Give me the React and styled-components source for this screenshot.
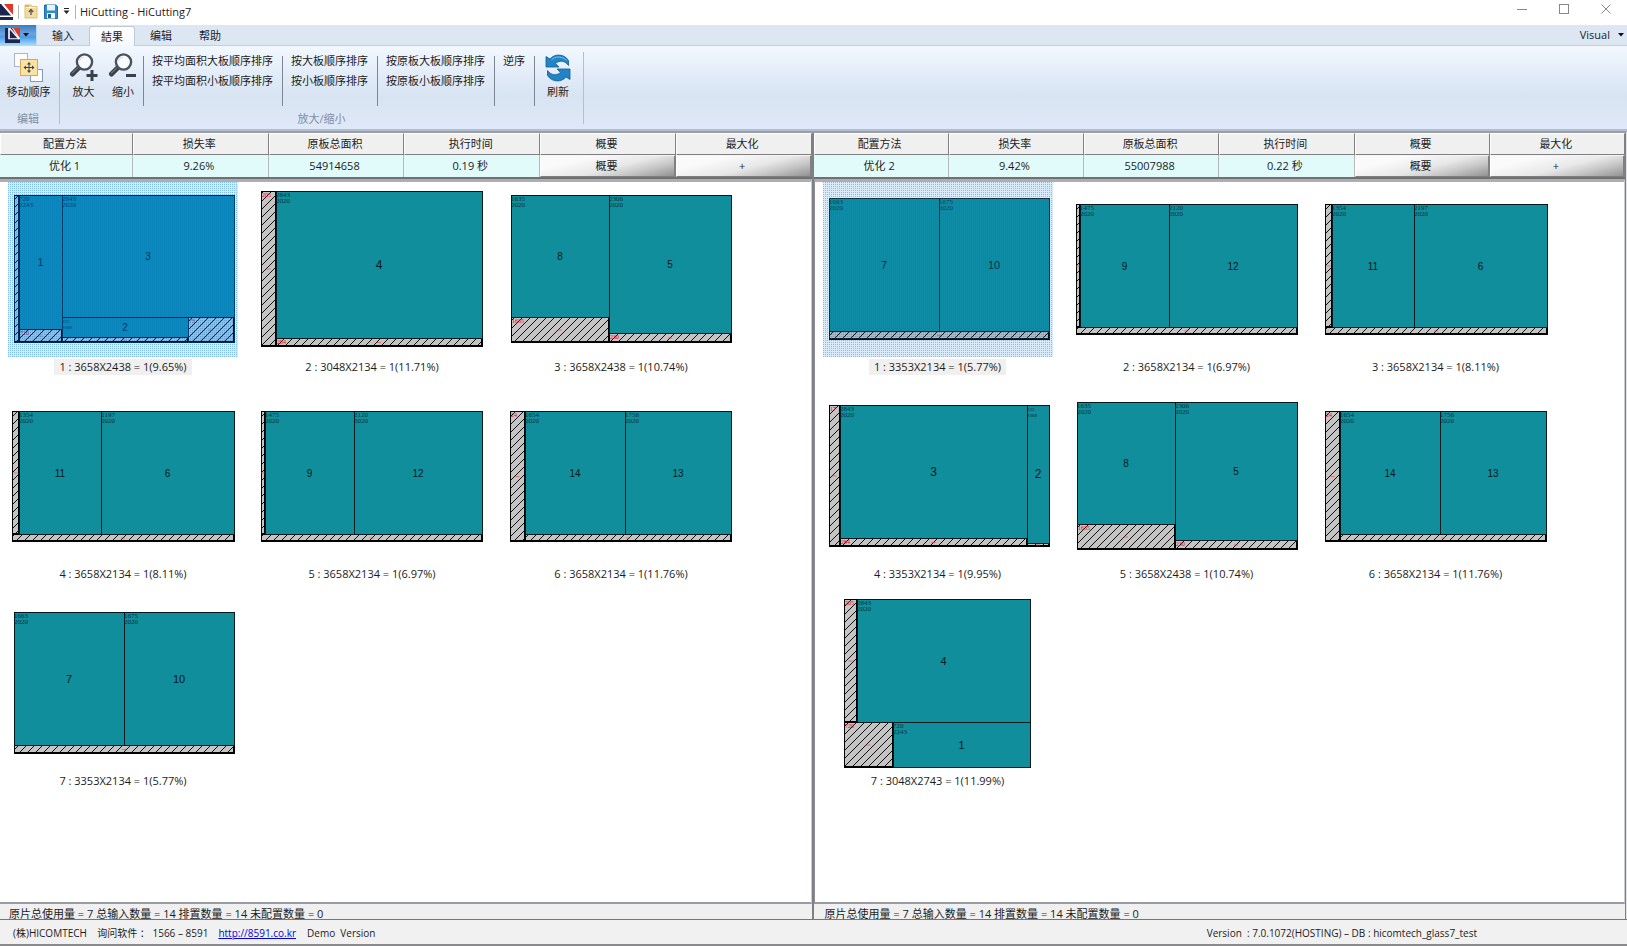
import React from "react";
import styled, { createGlobalStyle, css } from "styled-components";

const Global = createGlobalStyle`
  * { box-sizing: border-box; }
  body {
    margin: 0;
    background: #f0f0f0;
    color: #1c1c1c;
    font: 11px/16px "Open Sans", "Noto Sans CJK SC", sans-serif;
  }
  button { font: inherit; color: inherit; border: 0; background: none; padding: 0; }
  h1, p { margin: 0; font: inherit; }
`;

/* ---------- frame ---------- */

const Page = styled.div`
  display: flex;
  flex-direction: column;
  min-height: 100vh;
`;

const TitleBar = styled.header`
  display: flex;
  align-items: center;
  height: 25px;
  padding-bottom: 2px;
  background: #fff;
`;

const QuickButton = styled.button`
  display: flex;
  align-items: center;
  justify-content: center;
  width: ${(p) => p.$width || 20}px;
  height: 18px;
  svg { display: block; }
`;

const TitleRule = styled.span`
  width: 1px;
  height: 14px;
  margin: 0 ${(p) => p.$space || 4}px 0 ${(p) => p.$before || 4}px;
  background: #b4b4b4;
`;

const Title = styled.h1`
  font-size: 11px;
`;

const WindowButtons = styled.div`
  display: flex;
  align-self: flex-start;
  gap: 30px;
  margin-left: auto;
  padding-right: 15px;
`;

/* ---------- tabs ---------- */

const TabBar = styled.nav`
  display: flex;
  align-items: stretch;
  height: 21px;
  background: #dde7f3;
  border-bottom: 1px solid #c4d0de;
`;

const FileButton = styled.button`
  display: flex;
  align-items: center;
  gap: 3px;
  width: 37px;
  padding-left: 5px;
  background: linear-gradient(#3a7cc4, #6aa5dc 45%, #4b9be6 60%, #a5d8fb);
  border-right: 1px solid #bcd8f2;
`;

const Tab = styled.button`
  width: 46px;
  margin: 1px 2px 0 1px;
  line-height: 20px;
  ${(p) =>
    p.$active &&
    css`
      height: 20px;
      background: linear-gradient(#fff, #f4f8fe);
      border: 1px solid #bccadb;
      border-bottom: 0;
      border-radius: 3px 3px 0 0;
    `}
`;

const Tabs = styled.div`
  display: flex;
  padding-left: 2px;
`;

const VisualMenu = styled.button`
  display: flex;
  align-items: center;
  gap: 8px;
  margin-left: auto;
  padding-right: 3px;
`;

/* ---------- ribbon ---------- */

const Ribbon = styled.section`
  display: flex;
  height: 85px;
  padding: 6px 0;
  background: linear-gradient(#f3f8ff, #e2ecf8 35%, #d8e4f2 60%, #dfe8f8);
  border-bottom: 2px solid #b1bfd2;
`;

const RibbonGroup = styled.div`
  display: flex;
  flex-direction: column;
  justify-content: space-between;
  height: 72px;
  border-right: 1px solid #b3c0d2;
`;

const GroupBody = styled.div`
  display: flex;
  padding: 0 ${(p) => p.$right}px 0 ${(p) => p.$left}px;
`;

const GroupName = styled.p`
  color: #7d8da3;
  line-height: 11px;
  text-align: center;
  padding-right: ${(p) => p.$shift || 0}px;
`;

const BigButton = styled.button`
  display: flex;
  flex-direction: column;
  align-items: center;
  width: ${(p) => p.$width}px;
  white-space: nowrap;
  line-height: 16px;
  svg { display: block; margin-bottom: 1px; }
`;

const CommandList = styled.div`
  display: flex;
  flex-direction: column;
  align-items: flex-start;
  height: 50px;
  margin-top: 4px;
  padding: 0 9px 0 8px;
  border-left: 1px solid #7d8794;
  border-right: ${(p) => (p.$last ? "1px solid #7d8794" : "0")};
`;

const Command = styled.button`
  margin: -3px 0 7px;
  line-height: 16px;
  white-space: nowrap;
`;

/* ---------- result panes ---------- */

const Workspace = styled.main`
  display: flex;
  flex: 1;
  gap: 2px;
  padding-right: 1px;
  background: #7e8086;
  border-top: 2px solid #9c9ea2;
  border-right: 1px solid #e4e4e6;
`;

const Pane = styled.section`
  display: flex;
  flex-direction: column;
  flex: 1 1 0;
  min-width: 0;
  background: #f0f0f0;
`;

const Summary = styled.table`
  width: 100%;
  table-layout: fixed;
  border-collapse: separate;
  border-spacing: 0;
  text-align: center;
`;

const HeadCell = styled.th`
  height: 22px;
  padding: 0 3px 0 0;
  font-weight: normal;
  background: #f0f0f0;
  border: 1px solid #808080;
  border-top-color: #fff;
  border-left-color: #fff;
  &:first-child { width: ${(p) => p.$first}; }
`;

const ValueCell = styled.td`
  height: 22px;
  padding: ${(p) => (p.$plain ? "0" : "0 3px 0 0")};
  line-height: 20px;
  background: ${(p) => (p.$plain ? "#c8c8c8" : "#e0fbfa")};
  border-right: ${(p) => (p.$plain ? "0" : "1px solid #b4b8b8")};
`;

const CellButton = styled.button`
  display: block;
  width: 100%;
  height: 22px;
  padding-right: 2px;
  color: #1c1c1c;
  background: linear-gradient(166deg, #fafafa 25%, #e8e8e8 55%, #c6c6c6 75%, #929292);
  border: 1px solid #808080;
  border-left-color: #fff;
  border-top-color: #f4f4f4;
  border-right-width: 2px;
`;

const Board = styled.div`
  flex: 1;
  display: grid;
  grid-template-columns: repeat(auto-fill, 230px);
  grid-auto-rows: 196px;
  gap: 11px 19px;
  align-content: start;
  margin-top: 2px;
  padding-left: 8px;
  background: #fff;
  border-top: 3px solid #adadb2;
  border-bottom: 2px solid #9a9ca4;
  border-left: ${(p) => (p.$edge ? "1px solid #8a8e98" : "0")};
  border-right: 1px solid #c9ccd2;
  box-shadow: 0 -2px 0 #6f7074;
`;

const Sheet = styled.figure`
  display: flex;
  flex-direction: column;
  align-items: center;
  margin: 0;
  svg { display: block; }
`;

const Caption = styled.figcaption`
  margin-top: 2px;
  padding: 0 5px;
  line-height: 16px;
  white-space: nowrap;
  background: ${(p) => (p.$selected ? "#f0f0f0" : "transparent")};
`;

const Totals = styled.p`
  height: 15px;
  padding-left: ${(p) => p.$inset}px;
  line-height: 20px;
  white-space: nowrap;
`;

const Footer = styled.footer`
  display: flex;
  align-items: center;
  height: 27px;
  padding: 1px 150px 0 13px;
  background: #f1f1f1;
  border-top: 1px solid #76777a;
  border-bottom: 2px solid #8a8a8c;
  font-size: 10px;
  white-space: pre;
  a { color: #0000ee; margin: 0 11px 0 10px; }
`;

const Version = styled.span`
  margin-left: auto;
`;

/* ---------- icons ---------- */

const Logo = ({ size = 15 }) => (
  <svg width={size} height={size} viewBox="0 0 15 15">
    <rect width="15" height="15" fill="#fff" />
    <path d="M0 0H3.2V11.2H15V15H0Z" fill="#1b2550" />
    <path d="M4.8 0H7L13 9.500V10.200H4.800Z" fill="#1b2550" />
    <path d="M8 0H15V10.200Z" fill="#e2382a" />
    <path d="M4.500 0L14 11" stroke="#fff" strokeWidth="1.400" />
  </svg>
);

const AppMark = () => (
  <svg width="13" height="16" viewBox="0 0 13 16">
    <path d="M0 0V11.500H11.500L1.500 0Z" fill="#1b2550" />
    <path d="M4 0H13V11Z" fill="#e2382a" />
    <path d="M0 13H13V16H0Z" fill="#1b2550" />
    <path d="M2 0L12.500 12" stroke="#fff" strokeWidth="1.400" />
  </svg>
);

const FolderIcon = () => (
  <svg width="14" height="15" viewBox="0 0 14 15">
    <path d="M1 1H7L8 2.5H13V14H1Z" fill="#f3dc9c" stroke="#dcc07c" />
    <path d="M1 1H5V3H1Z" fill="#d9b565" />
    <path d="M2 3.5H12" stroke="#fff8e0" />
    <path d="M7 11V6M4.8 8L7 5.5L9.2 8" fill="none" stroke="#4d5666" strokeWidth="1.3" />
  </svg>
);

const SaveIcon = () => (
  <svg width="14" height="15" viewBox="0 0 14 15">
    <path d="M.5 1H12L13.5 2.5V14.5H.5Z" fill="#2f8ccb" stroke="#1e6ea6" />
    <rect x="3" y="1" width="8" height="5.5" fill="#e9f3fa" />
    <rect x="3" y="9" width="8" height="5.5" fill="#fff" />
    <rect x="4" y="10" width="3" height="4" fill="#1e5f92" />
  </svg>
);

const MoreIcon = () => (
  <svg width="7" height="7" viewBox="0 0 7 7">
    <path d="M1 .5H6" stroke="#222" />
    <path d="M.5 2.5H6.5L3.5 6Z" fill="#222" />
  </svg>
);

const Caret = ({ color = "#111" }) => (
  <svg width="6" height="4" viewBox="0 0 6 4">
    <path d="M0 0H6L3 3.5Z" fill={color} />
  </svg>
);

const MoveIcon = () => (
  <svg width="30" height="31" viewBox="0 0 30 31">
    <rect x=".5" y="1.5" width="13" height="13" fill="#fdfdff" stroke="#aab4c4" />
    <rect x="16.500" y="17.500" width="12" height="12" fill="#fdfdff" stroke="#8796ad" />
    <rect x="6.500" y="7.500" width="17" height="16" fill="#fbe2a0" stroke="#d2ab58" />
    <path d="M15 11V20M10.500 15.500H19.500" stroke="#38424f" />
    <path d="M13 12.500L15 10L17 12.500ZM13 18.500L15 21L17 18.500ZM12 13.500L9.500 15.500L12 17.500ZM18 13.500L20.500 15.500L18 17.500Z" fill="#38424f" />
  </svg>
);

const ZoomIcon = ({ plus }) => (
  <svg width="30" height="31" viewBox="0 0 30 31">
    <path d="M10 15.500L3.500 22" stroke="#3a4149" strokeWidth="5" strokeLinecap="round" />
    <path d="M9 15.500L3 21.500" stroke="#8a9299" strokeWidth="1" />
    <circle cx="15.500" cy="10" r="7.600" fill="#f8fbff" stroke="#4b525a" strokeWidth="2.400" />
    <path d="M10.500 9A5 5 0 0 1 15 5" fill="none" stroke="#cfd9e4" />
    <path d={plus ? "M17.500 23.500H28.500M23 18V29" : "M18 23.500H28"} stroke="#39414a" strokeWidth="3" />
  </svg>
);

const RefreshIcon = () => (
  <svg width="28" height="31" viewBox="0 0 28 31">
    <g fill="#1f85c7" stroke="#125b92" strokeWidth=".8" strokeLinejoin="round">
      <path d="M2 4.500L6 7C10.500 1.500 20 1.500 24.500 8.500V13.500C21 8.500 15.500 8 11.500 11.500L15 15H2Z" />
      <path d="M26 27.500L22 25C17.500 30.500 8 30.500 3.500 23.500V18.500C7 23.500 12.500 24 16.500 20.500L13 17H26Z" />
    </g>
    <path d="M7.500 7.800C11.500 3.800 18.500 4 22.500 8.500" fill="none" stroke="#7cc3ec" />
  </svg>
);

/* ---------- cutting drawings ---------- */

// g: glass piece [number, x1, y1, x2, y2, width, height]; w: offcut [x1, y1, x2, y2, size]
const layoutA = {
  g: [[1, 11, 13, 54, 147, 720, 2243], [3, 54, 13, 226, 135, 2843, 2020], [2, 54, 135, 180, 155, 335, 2088]],
  w: [[6, 13, 11, 160, ""], [11, 147, 54, 160, "720"], [180, 135, 226, 160, "73"], [54, 155, 180, 160, ""]],
};
const layoutB = {
  g: [[4, 19, 9, 225, 156, 2843, 2020]],
  w: [[4, 9, 19, 164, "205"], [19, 156, 225, 164, "284"]],
};
const layoutC = {
  g: [[8, 5, 13, 103, 135, 1635, 2020], [5, 103, 13, 225, 151, 2306, 2020]],
  w: [[5, 135, 103, 160, "1635"], [103, 151, 225, 160, "230"]],
};
const layoutD = {
  g: [[11, 11, 22, 93, 145, 1354, 2020], [6, 93, 22, 226, 145, 2197, 2020]],
  w: [[4, 22, 11, 145, ""], [4, 145, 226, 152, ""]],
};
const layoutE = {
  g: [[9, 8, 22, 97, 145, 1475, 2020], [12, 97, 22, 225, 145, 2120, 2020]],
  w: [[4, 22, 8, 145, ""], [4, 145, 225, 152, ""]],
};
const layoutF = {
  g: [[14, 19, 22, 119, 145, 1654, 2020], [13, 119, 22, 225, 145, 1756, 2020]],
  w: [[4, 22, 19, 152, "24"], [19, 145, 225, 152, ""]],
};
const layoutG = {
  g: [[7, 6, 16, 116, 149, 1663, 2020], [10, 116, 16, 226, 149, 1675, 2020]],
  w: [[6, 149, 226, 157, ""]],
};
const layoutH = {
  g: [[3, 17, 16, 204, 149, 2843, 2020], [2, 204, 16, 226, 154, 335, 2088]],
  w: [[6, 16, 17, 157, "17"], [17, 149, 204, 157, "284"], [204, 154, 226, 157, ""]],
};
const layoutI = {
  g: [[4, 34, 3, 207, 126, 2843, 2020], [1, 70, 126, 207, 171, 720, 2243]],
  w: [[21, 3, 34, 126, "205"], [21, 126, 70, 171, "720"]],
};

const PieceNumber = styled.text`
  font: ${(p) => p.$size}px "Liberation Sans", sans-serif;
  fill: #06181c;
  text-anchor: middle;
`;

const PieceSize = styled.text`
  font: ${(p) => p.$size}px "Liberation Serif", serif;
  fill: #0a3038;
`;

const OffcutSize = styled.text`
  font: 6px "Liberation Serif", serif;
  fill: #f00020;
`;

function Drawing({ layout, selected, numberSize = 10 }) {
  return (
    <svg width="230" height="175" viewBox="0 0 230 175" role="img">
      <defs>
        <pattern id="hatch" width="8" height="8" patternUnits="userSpaceOnUse">
          <rect width="8" height="8" fill="#c4c4c4" />
          <path d="M-1 9L9 -1M-1 1L1 -1M7 9L9 7" stroke="#111" strokeWidth="1" />
        </pattern>
        <pattern id="select" width="2" height="2" patternUnits="userSpaceOnUse">
          <rect width="2" height="2" fill="#0078d7" opacity=".15" />
          <rect width="1" height="1" fill="#0078d7" opacity=".4" />
        </pattern>
      </defs>
      {layout.w.map(([x1, y1, x2, y2, size]) => (
        <g key={`${x1}-${y1}`}>
          <rect x={x1 + 0.5} y={y1 + 0.5} width={x2 - x1} height={y2 - y1} fill="url(#hatch)" stroke="#000" />
          <path d={`M${x1 + 1} ${y2 - 0.5}H${x2}M${x2 - 0.5} ${y1}V${y2}`} stroke="#000" />
          <rect x={(x1 + x2) / 2 - 2} y={(y1 + y2) / 2} width="4" height="1" fill="#f33" opacity=".6" />
          <OffcutSize x={x1 + 1} y={y1 + 6}>{size}</OffcutSize>
        </g>
      ))}
      {layout.g.map(([n, x1, y1, x2, y2, w, h]) => (
        <g key={n}>
          <rect x={x1 + 0.5} y={y1 + 0.5} width={x2 - x1} height={y2 - y1} fill="#108e9c" stroke="#05181b" />
          <PieceSize $size={w < 400 ? 5 : 7} x={x1} y={y1 + 6}>{w}</PieceSize>
          <PieceSize $size={w < 400 ? 5 : 7} x={x1} y={y1 + 12}>{h}</PieceSize>
          <PieceNumber $size={numberSize} x={(x1 + x2) / 2} y={(y1 + y2) / 2 + 4}>{n}</PieceNumber>
        </g>
      ))}
      {selected && <rect width="230" height="175" fill="url(#select)" />}
    </svg>
  );
}

/* ---------- data ---------- */

const headings = ["配置方法", "损失率", "原板总面积", "执行时间", "概要", "最大化"];
const totals = "原片总使用量 = 7 总输入数量 = 14 排置数量 = 14 未配置数量 = 0";

const results = [
  {
    first: "133px",
    values: ["优化 1", "9.26%", "54914658", "0.19 秒"],
    sheets: [
      ["1 : 3658X2438 = 1(9.65%)", layoutA],
      ["2 : 3048X2134 = 1(11.71%)", layoutB, 12],
      ["3 : 3658X2438 = 1(10.74%)", layoutC],
      ["4 : 3658X2134 = 1(8.11%)", layoutD],
      ["5 : 3658X2134 = 1(6.97%)", layoutE],
      ["6 : 3658X2134 = 1(11.76%)", layoutF],
      ["7 : 3353X2134 = 1(5.77%)", layoutG, 11],
    ],
  },
  {
    first: "auto",
    values: ["优化 2", "9.42%", "55007988", "0.22 秒"],
    sheets: [
      ["1 : 3353X2134 = 1(5.77%)", layoutG, 11],
      ["2 : 3658X2134 = 1(6.97%)", layoutE],
      ["3 : 3658X2134 = 1(8.11%)", layoutD],
      ["4 : 3353X2134 = 1(9.95%)", layoutH, 12],
      ["5 : 3658X2438 = 1(10.74%)", layoutC],
      ["6 : 3658X2134 = 1(11.76%)", layoutF],
      ["7 : 3048X2743 = 1(11.99%)", layoutI, 11],
    ],
  },
];

function ResultPane({ result, edge }) {
  return (
    <Pane>
      <Summary>
        <thead>
          <tr>
            {headings.map((h) => (
              <HeadCell key={h} $first={result.first}>{h}</HeadCell>
            ))}
          </tr>
        </thead>
        <tbody>
          <tr>
            {result.values.map((v) => (
              <ValueCell key={v}>{v}</ValueCell>
            ))}
            <ValueCell $plain><CellButton>概要</CellButton></ValueCell>
            <ValueCell $plain><CellButton>+</CellButton></ValueCell>
          </tr>
        </tbody>
      </Summary>
      <Board $edge={edge}>
        {result.sheets.map(([caption, layout, size], i) => (
          <Sheet key={caption}>
            <Drawing layout={layout} selected={i === 0} numberSize={size} />
            <Caption $selected={i === 0}>{caption}</Caption>
          </Sheet>
        ))}
      </Board>
      <Totals $inset={edge ? 11 : 9}>{totals}</Totals>
    </Pane>
  );
}

export default function App() {
  return (
    <Page>
      <Global />
      <TitleBar>
        <AppMark />
        <TitleRule $before={5} $space={2} />
        <QuickButton aria-label="Open"><FolderIcon /></QuickButton>
        <QuickButton aria-label="Save"><SaveIcon /></QuickButton>
        <QuickButton aria-label="More" $width={10}><MoreIcon /></QuickButton>
        <TitleRule $space={4} />
        <Title>HiCutting - HiCutting7</Title>
        <WindowButtons>
          <QuickButton aria-label="Minimize" $width={12}>
            <svg width="10" height="10"><path d="M0 5.500H10" stroke="#888" /></svg>
          </QuickButton>
          <QuickButton aria-label="Maximize" $width={12}>
            <svg width="10" height="10"><rect x=".5" y=".5" width="9" height="9" fill="none" stroke="#888" /></svg>
          </QuickButton>
          <QuickButton aria-label="Close" $width={12}>
            <svg width="10" height="10"><path d="M.5 .5L9.500 9.500M9.500 .5L.5 9.500" stroke="#888" /></svg>
          </QuickButton>
        </WindowButtons>
      </TitleBar>

      <TabBar>
        <FileButton aria-label="File"><Logo /><Caret /></FileButton>
        <Tabs>
          <Tab>输入</Tab>
          <Tab $active>結果</Tab>
          <Tab>编辑</Tab>
          <Tab>帮助</Tab>
        </Tabs>
        <VisualMenu>Visual<Caret /></VisualMenu>
      </TabBar>

      <Ribbon>
        <RibbonGroup>
          <GroupBody $left={2} $right={4}>
            <BigButton $width={53}><MoveIcon />移动顺序</BigButton>
          </GroupBody>
          <GroupName $shift={3}>编辑</GroupName>
        </RibbonGroup>
        <RibbonGroup>
          <GroupBody $left={4} $right={2}>
            <BigButton $width={39}><ZoomIcon plus />放大</BigButton>
            <BigButton $width={40}><ZoomIcon />缩小</BigButton>
            <CommandList>
              <Command>按平均面积大板顺序排序</Command>
              <Command>按平均面积小板顺序排序</Command>
            </CommandList>
            <CommandList>
              <Command>按大板顺序排序</Command>
              <Command>按小板顺序排序</Command>
            </CommandList>
            <CommandList>
              <Command>按原板大板顺序排序</Command>
              <Command>按原板小板顺序排序</Command>
            </CommandList>
            <CommandList $last>
              <Command>逆序</Command>
            </CommandList>
            <BigButton $width={46}><RefreshIcon />刷新</BigButton>
          </GroupBody>
          <GroupName>放大/缩小</GroupName>
        </RibbonGroup>
      </Ribbon>

      <Workspace>
        {results.map((r, i) => (
          <ResultPane key={r.first} result={r} edge={i === 1} />
        ))}
      </Workspace>

      <Footer>
        <span>{"(株)HICOMTECH    询问软件 ： 1566 – 8591"}</span>
        <a href="http://8591.co.kr">http://8591.co.kr</a>
        <span>{"Demo  Version"}</span>
        <Version>{"Version  : 7.0.1072(HOSTING) – DB : hicomtech_glass7_test"}</Version>
      </Footer>
    </Page>
  );
}
